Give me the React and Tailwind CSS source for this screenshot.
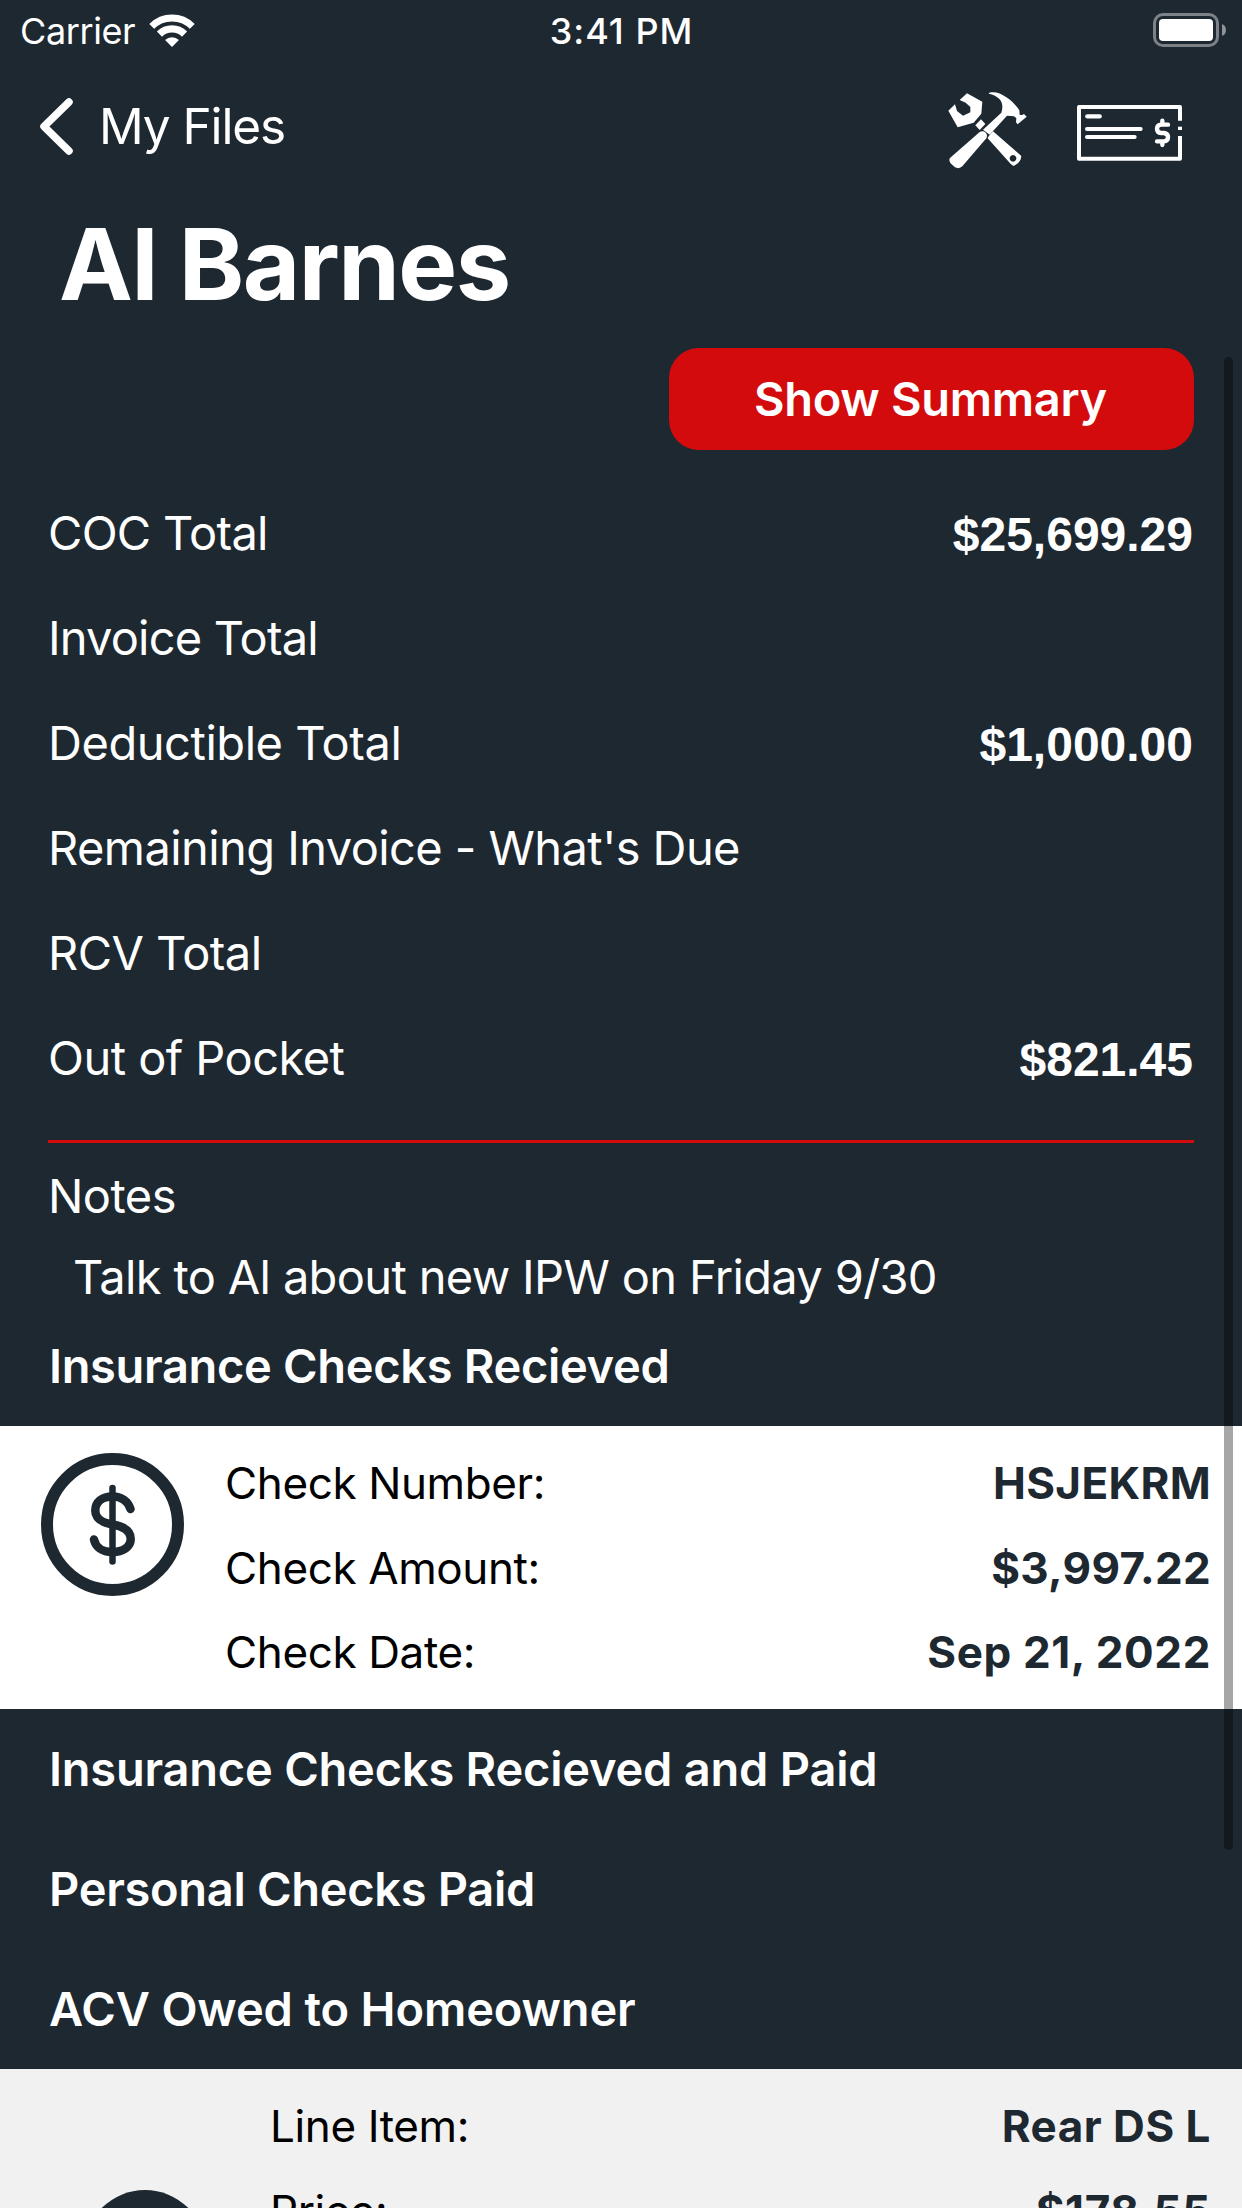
import React from "react";

function WifiIcon() {
  return (
    <svg className="mb-[2px] h-[33px] w-[46px]" viewBox="447 38 138 100" fill="none" stroke="#fff">
      <path d="M454.5 75.5A87 87 0 0 1 577.500 75.5" strokeWidth="21" />
      <path d="M478 99A54 54 0 0 1 554 99" strokeWidth="22" />
      <path d="M516 138L495 117A30 30 0 0 1 537 117Z" fill="#fff" stroke="none" />
    </svg>
  );
}

function BatteryIcon() {
  return (
    <svg className="mb-[2px] h-[34px] w-[73px]" viewBox="0 0 73 34" fill="none">
      <rect x="1.500" y="1.500" width="63" height="31" rx="8.500" stroke="#fff" strokeOpacity="0.42" strokeWidth="3" />
      <rect x="6" y="6" width="54" height="22" rx="4" fill="#fff" />
      <path d="M69 11C74.300 12.500 74.300 21.500 69 23Z" fill="#fff" fillOpacity="0.5" />
    </svg>
  );
}

function ToolsIcon() {
  return (
    <svg className="h-[77px] w-[79px]" viewBox="83 275 237 231" fill="#fff">
      <path d="M140 279L186 304L183 340L160 367L112 381L84 331L104 312L110 332L128 346L150 336L150 320L136 307L118 299Z" />
      <path d="M182 357L195 371L178 389L165 375Z" />
      <path
        fillRule="evenodd"
        d="M218 393L303 467Q302 486 280 497L272 492L202 414L205 408ZM278 464a10 10 0 1 0 0.100 0Z"
      />
      <path d="M205 280C206 276 212 276 219 276C245 276 280 303 297 330L298 343Q306 345 311 341L319 349L292 372L287 366L288 354Q282 345 271 347L260 346L208 403L188 388L243 337C248 322 247 308 238 297Q226 284 205 280Z" />
      <path d="M178 395C188 387 206 399 198 414L126 498Q117 507 104 501L92 490Q84 480 89 473Z" />
    </svg>
  );
}

function CheckIcon() {
  return (
    <svg
      className="mt-[6px] h-[56px] w-[105px]"
      viewBox="471 315 315 168"
      fill="none"
      stroke="#fff"
      strokeWidth="12"
    >
      <path d="M780 362V321H477V476H780V408" strokeLinejoin="round" />
      <path d="M774 385H786" strokeWidth="10" />
      <g strokeLinecap="round">
        <path d="M502 349H539" strokeWidth="13" />
        <path d="M501 387H662M501 411H644" />
        <path
          d="M744 374H724Q711 375 711 386Q711 398 724 399H732Q744 401 744 411Q744 423 732 424H711M727 362V373M727 425V435"
          strokeWidth="13"
        />
      </g>
    </svg>
  );
}

function DollarCircleIcon() {
  return (
    <svg className="h-[143px] w-[143px]" viewBox="0 0 143 143" fill="none" stroke="#1e2831" strokeLinecap="round">
      <circle cx="71.500" cy="71.500" r="65.500" strokeWidth="12" />
      <path d="M71.500 35V108.500" strokeWidth="6.500" />
      <path
        d="M89.500 56C87 48 80 43.500 71.500 43.500C61 43.500 54.300 49 54.300 57.500C54.300 66 61 69.500 71.500 71.500C83 73.500 89.700 78 89.700 86C89.700 94 82 99 71.500 99C61 99 54.500 94 53 86.500"
        strokeWidth="8.500"
      />
    </svg>
  );
}

const totals = [
  { label: "COC Total", spacing: "tracking-[-0.7px]", value: "$25,699.29" },
  { label: "Invoice Total", spacing: "tracking-[-0.82px]" },
  { label: "Deductible Total", spacing: "tracking-[-0.45px]", value: "$1,000.00" },
  { label: "Remaining Invoice - What's Due", spacing: "tracking-[-0.57px]" },
  { label: "RCV Total", spacing: "tracking-[-0.55px]" },
  { label: "Out of Pocket", spacing: "tracking-[-0.54px]", value: "$821.45" },
];

const checkRows = [
  { label: "Check Number:", value: "HSJEKRM", spacing: "tracking-[0.33px]" },
  { label: "Check Amount:", value: "$3,997.22", spacing: "tracking-[0.32px]" },
  { label: "Check Date:", value: "Sep 21, 2022", spacing: "tracking-[0.6px]" },
];

const lineItemRows = [
  { label: "Line Item:", value: "Rear DS L", spacing: "tracking-[0.5px]" },
  { label: "Price:", value: "$178.55", spacing: "tracking-[0.6px]" },
];

function DetailRows({ rows }) {
  return (
    <div className="flex flex-1 flex-col">
      {rows.map((row) => (
        <div key={row.label} className="flex h-[84.500px] shrink-0 items-center justify-between text-[44px] leading-none">
          <span className="tracking-[-0.38px] text-black">{row.label}</span>
          <span className={`font-bold text-[#1e2831] ${row.spacing}`}>{row.value}</span>
        </div>
      ))}
    </div>
  );
}

function SectionHeading({ spacing = "tracking-[-0.22px]", children }) {
  return (
    <h2
      className={`flex h-[120px] items-center pb-[2px] pl-[49px] text-[47px] leading-none font-semibold ${spacing}`}
    >
      {children}
    </h2>
  );
}

export default function App() {
  return (
    <div className="relative flex h-[2208px] w-[1242px] flex-col overflow-hidden bg-[#1e2831] font-[Inter,sans-serif] whitespace-nowrap text-white">
      <div className="grid h-[62px] shrink-0 grid-cols-3 items-center pr-[16px] pl-[20px] text-[36px] leading-none">
        <div className="flex items-center gap-[14px]">
          <span className="tracking-[-0.4px]">Carrier</span>
          <WifiIcon />
        </div>
        <span className="pr-[3px] text-center font-medium tracking-[1px]">3:41 PM</span>
        <div className="flex justify-end">
          <BatteryIcon />
        </div>
      </div>

      <nav className="flex h-[128px] shrink-0 items-center pr-[60px] pl-[40px]">
        <svg className="h-[57px] w-[33px]" viewBox="0 0 33 57" fill="none" stroke="#fff" strokeWidth="7.500" strokeLinecap="round" strokeLinejoin="round">
          <path d="M29 4L4 28.500L29 53" />
        </svg>
        <span className="ml-[26px] pt-[2px] text-[49.500px] leading-none tracking-[-1.1px]">My Files</span>
        <div className="ml-auto flex items-center gap-[50px] pt-[8px]">
          <ToolsIcon />
          <CheckIcon />
        </div>
      </nav>

      <h1 className="flex h-[148px] shrink-0 items-center pl-[59px] text-[99px] leading-none font-bold tracking-[-1.5px]">
        Al Barnes
      </h1>

      <button className="mt-[10px] mr-[48px] h-[102px] w-[525px] shrink-0 self-end rounded-[30px] bg-[#d30b0d] pr-[2px] pb-[2px] text-[47px] leading-none font-semibold tracking-[-0.3px]">
        Show Summary
      </button>

      <div className="mx-[48px] mt-[30px] flex shrink-0 flex-col border-b-[3px] border-[#d30b0d] pb-[30px]">
        {totals.map((row) => (
          <div key={row.label} className="flex h-[105px] items-center justify-between text-[47px] leading-none">
            <span className={row.spacing}>{row.label}</span>
            {row.value && (
              <span className="pt-[5px] pr-[1px] font-['Liberation_Sans',sans-serif] text-[48px] font-bold">
                {row.value}
              </span>
            )}
          </div>
        ))}
      </div>

      <div className="flex h-[106px] shrink-0 items-center pb-[2px] pl-[48px] text-[47px] leading-none tracking-[-0.55px]">
        Notes
      </div>
      <div className="flex h-[56px] shrink-0 items-center pb-[2px] pl-[73px] text-[47px] leading-none tracking-[-0.65px]">
        Talk to Al about new IPW on Friday 9/30
      </div>
      <h2 className="flex h-[121px] shrink-0 items-center pl-[49px] text-[47px] leading-none font-semibold tracking-[-0.33px]">
        Insurance Checks Recieved
      </h2>

      <div className="flex h-[283px] shrink-0 bg-white pt-[15px] pr-[31px] pl-[41px]">
        <div className="mr-[41px] pt-[12px]">
          <DollarCircleIcon />
        </div>
        <DetailRows rows={checkRows} />
      </div>

      <div className="shrink-0">
        <SectionHeading>Insurance Checks Recieved and Paid</SectionHeading>
        <SectionHeading spacing="tracking-[-0.31px]">Personal Checks Paid</SectionHeading>
        <SectionHeading spacing="tracking-[-0.15px]">ACV Owed to Homeowner</SectionHeading>
      </div>

      <div className="flex h-[139px] shrink-0 overflow-hidden bg-[#f1f1f1] pt-[15px] pr-[31px] pl-[84px]">
        <div className="mt-[106px] mr-[64px] h-[122px] w-[122px] shrink-0 rounded-full bg-[#1e2831]" />
        <DetailRows rows={lineItemRows} />
      </div>

      <div className="absolute top-[357px] right-[9px] h-[1493px] w-[9px] rounded-full bg-black/35" />
    </div>
  );
}
